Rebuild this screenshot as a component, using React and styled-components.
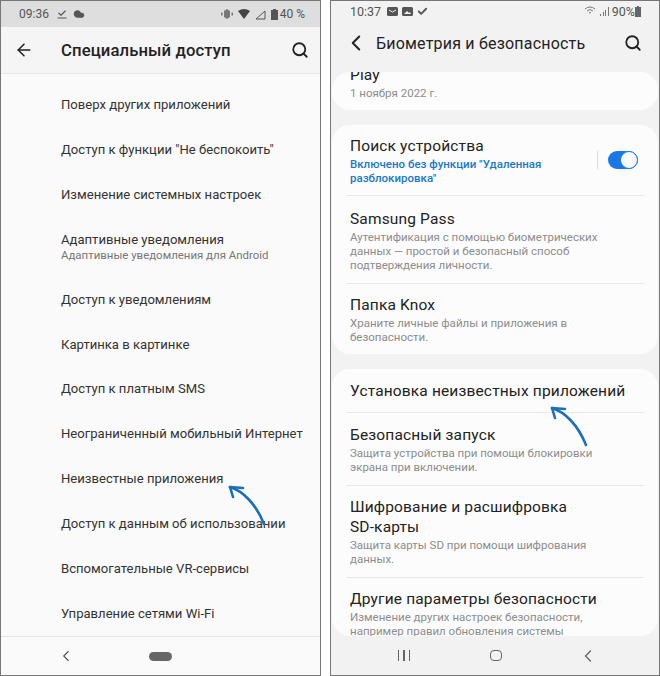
import React from 'react';
import styled, { createGlobalStyle } from 'styled-components';
import { ArrowLeft, Search, ChevronLeft, Check, Cloud } from 'lucide-react';

const GlobalStyle = createGlobalStyle`
  html, body {
    margin: 0;
    padding: 0;
    background: #fff;
    font-family: Roboto, "Liberation Sans", sans-serif;
  }
`;

const Page = styled.div`
  width: 660px;
  height: 676px;
  display: flex;
  justify-content: space-between;
  overflow: hidden;
`;

const Phone = styled.div`
  position: relative;
  box-sizing: border-box;
  width: ${p => p.$width}px;
  height: 676px;
  display: flex;
  flex-direction: column;
  border: 1px solid #777;
  background: ${p => p.$bg};
  overflow: hidden;
`;

const AndroidStatus = styled.div`
  flex: 0 0 26px;
  display: flex;
  align-items: center;
  padding: 0 15px 0 18px;
  background: #dedede;
  color: #555;
  font-size: 12px;
`;

const StatusIcons = styled.div`
  display: flex;
  align-items: center;
  gap: ${p => p.$gap || 4}px;
  margin-left: ${p => p.$left || 0}px;
`;

const StatusText = styled.span`
  margin-left: ${p => p.$left}px;
`;

const Spacer = styled.div`
  flex: 1;
`;

const AndroidBar = styled.div`
  flex: 0 0 47px;
  box-sizing: border-box;
  display: flex;
  align-items: center;
  padding: 0 11px 0 13px;
  background: #f5f5f5;
  border-bottom: 1px solid #e8e8e8;
  color: #222;
`;

const AndroidTitle = styled.h1`
  flex: 1;
  margin: 0 0 0 27px;
  font-size: 16.7px;
  font-weight: 500;
  letter-spacing: 0.1px;
`;

const AccessList = styled.div`
  flex: 1;
  padding: 8px 0 0 60px;
  background: #fafafa;
`;

const AccessRow = styled.div`
  height: ${p => (p.$tall ? 60 : 44.9)}px;
  display: flex;
  flex-direction: column;
  justify-content: center;
`;

const AccessName = styled.div`
  font-size: 13.1px;
  line-height: 17px;
  color: #333;
  white-space: nowrap;
`;

const AccessHint = styled.div`
  font-size: 11.45px;
  line-height: 15px;
  color: #777;
  white-space: nowrap;
`;

const AndroidNav = styled.div`
  flex: 0 0 40px;
  box-sizing: border-box;
  display: flex;
  align-items: center;
  padding-left: 56px;
  gap: 74px;
  background: #fafafa;
  border-top: 1px solid #e4e4e4;
  color: #555;
`;

const Pill = styled.div`
  width: 23px;
  height: 9px;
  border-radius: 5px;
  background: #666;
`;

const SamsungStatus = styled.div`
  flex: 0 0 21px;
  display: flex;
  align-items: center;
  padding: 0 18px 0 19px;
  color: #555;
  font-size: 12.5px;
`;

const SamsungBar = styled.div`
  flex: 0 0 50px;
  box-sizing: border-box;
  display: flex;
  align-items: center;
  padding: 0 17px 8px 12px;
  color: #222;
`;

const SamsungTitle = styled.h1`
  flex: 1;
  margin: 0 0 0 7px;
  font-size: 16px;
  font-weight: 400;
  letter-spacing: 0.2px;
`;

const Scroller = styled.div`
  flex: 1;
  display: flex;
  flex-direction: column;
  gap: 15px;
  overflow: hidden;
`;

const Card = styled.div`
  flex: 0 0 auto;
  height: ${p => p.$height}px;
  margin: 0 1px;
  padding: 0 14px;
  box-sizing: border-box;
  background: #fcfcfc;
  border-radius: 18px;
  overflow: hidden;
`;

const Row = styled.div`
  height: ${p => p.$height}px;
  box-sizing: border-box;
  padding: ${p => p.$top || 0}px 4px 0;
  border-bottom: ${p => (p.$last ? 'none' : '1px solid #e9e9e9')};
`;

const CutRow = styled.div`
  margin-top: -7px;
  padding: 0 4px;
`;

const ToggleRow = styled(Row)`
  display: flex;
  align-items: center;
  padding-bottom: 11px;
`;

const ToggleText = styled.div`
  flex: 1;
`;

const Divider = styled.div`
  width: 1px;
  height: 18px;
  margin-right: 10px;
  background: #ddd;
`;

const Toggle = styled.div`
  position: relative;
  width: 30px;
  height: 18px;
  margin-right: 2px;
  box-sizing: border-box;
  border-radius: 9px;
  background: #1a78e6;
`;

const Knob = styled.div`
  position: absolute;
  right: 0;
  top: 0;
  width: 18px;
  height: 18px;
  box-sizing: border-box;
  border: 1px solid #1a78e6;
  border-radius: 50%;
  background: #fbfbfb;
`;

const Title = styled.div`
  font-size: 15.5px;
  line-height: 20px;
  color: #222;
  letter-spacing: 0.15px;
`;

const Sub = styled.div`
  margin-top: 1px;
  font-size: 11.5px;
  line-height: 14px;
  color: ${p => (p.$blue ? '#1a78c8' : '#8d8d8d')};
  font-weight: ${p => (p.$blue ? 500 : 400)};
`;

const SamsungNav = styled.div`
  flex: 0 0 39px;
  display: grid;
  grid-template-columns: repeat(3, 92px);
  align-items: center;
  justify-items: center;
  padding-left: 27px;
  color: #666;
`;

const Bars = styled.div`
  display: flex;
  gap: 4px;
`;

const Bar = styled.div`
  width: 1.5px;
  height: 11px;
  background: #666;
`;

const HomeKey = styled.div`
  width: 10px;
  height: 9px;
  border: 1.5px solid #666;
  border-radius: 4px;
`;

const Arrow = styled.svg`
  position: absolute;
  left: ${p => p.$x}px;
  top: ${p => p.$y}px;
`;

const rows = [
  { name: 'Поверх других приложений' },
  { name: 'Доступ к функции "Не беспокоить"' },
  { name: 'Изменение системных настроек' },
  { name: 'Адаптивные уведомления', hint: 'Адаптивные уведомления для Android' },
  { name: 'Доступ к уведомлениям' },
  { name: 'Картинка в картинке' },
  { name: 'Доступ к платным SMS' },
  { name: 'Неограниченный мобильный Интернет' },
  { name: 'Неизвестные приложения' },
  { name: 'Доступ к данным об использовании' },
  { name: 'Вспомогательные VR-сервисы' },
  { name: 'Управление сетями Wi-Fi' },
];

const BlueArrow = ({ x, y }) => (
  <Arrow $x={x} $y={y} width="44" height="44" viewBox="0 0 44 44" fill="none">
    <path d="M2 3 C 15 7 28 20 36 40" stroke="#1b6fb8" strokeWidth="2.6" strokeLinecap="round" />
    <path d="M15 4 L2 3 L5 13" stroke="#1b6fb8" strokeWidth="2.6" strokeLinecap="round" strokeLinejoin="round" />
  </Arrow>
);

const App = () => (
  <Page>
    <GlobalStyle />
    <Phone $width={321} $bg="#fafafa">
      <AndroidStatus>
        09:36
        <StatusIcons $left={8} $gap={6}>
          <svg width="10" height="9" viewBox="0 0 10 9" fill="none" stroke="#555" strokeWidth="1.2">
            <path d="M1.5 3 L4 5.2 L8.5 0.8 M0.5 8 H9.5" />
          </svg>
          <Cloud size={12} fill="#555" strokeWidth={1} />
        </StatusIcons>
        <Spacer />
        <StatusIcons $gap={5}>
          <svg width="12" height="10" viewBox="0 0 12 10">
            <path d="M3 2 L6 0 L9 2 V8 L6 10 L3 8 Z M0 3.5h1.5v3H0z M10.5 3.5H12v3h-1.5z" fill="#777" />
          </svg>
          <svg width="12" height="10" viewBox="0 0 12 10">
            <path d="M0 2 Q6 -2 12 2 L6 10z" fill="#444" />
          </svg>
          <svg width="11" height="11" viewBox="0 0 11 11">
            <path d="M1 10 L10 2 V10 Z" fill="none" stroke="#555" strokeWidth="1" />
          </svg>
          <svg width="7" height="11" viewBox="0 0 7 11">
            <path d="M2 0h3v1h2v10H0V1h2z" fill="#555" />
          </svg>
        </StatusIcons>
        <StatusText $left={2}>40 %</StatusText>
      </AndroidStatus>
      <AndroidBar>
        <ArrowLeft size={20} strokeWidth={1.8} />
        <AndroidTitle>Специальный доступ</AndroidTitle>
        <Search size={18} strokeWidth={2.4} />
      </AndroidBar>
      <AccessList>
        {rows.map(row => (
          <AccessRow key={row.name} $tall={!!row.hint}>
            <AccessName>{row.name}</AccessName>
            {row.hint && <AccessHint>{row.hint}</AccessHint>}
          </AccessRow>
        ))}
      </AccessList>
      <AndroidNav>
        <ChevronLeft size={18} strokeWidth={1.5} />
        <Pill />
      </AndroidNav>
      <BlueArrow x={227} y={483} />
    </Phone>

    <Phone $width={330} $bg="#f2f2f2">
      <SamsungStatus>
        10:37
        <StatusIcons $left={6} $gap={4}>
          <svg width="11" height="9" viewBox="0 0 11 9">
            <rect width="11" height="9" rx="1.5" fill="#555" />
            <path d="M2 3l3.5 2L9 3" stroke="#f2f2f2" fill="none" />
          </svg>
          <svg width="11" height="9" viewBox="0 0 11 9">
            <rect width="11" height="9" rx="1.5" fill="#555" />
            <path d="M2 7l3-3 2 2 1-1 1 2z" fill="#f2f2f2" />
          </svg>
          <Check size={11} strokeWidth={4} />
        </StatusIcons>
        <Spacer />
        <StatusIcons $gap={3}>
          <svg width="13" height="11" viewBox="0 0 13 11" fill="none" stroke="#777" strokeWidth="1">
            <path d="M1 3 Q6 -1 11 3 M3 5 Q6 2 9 5 M5 7 Q6 6 7 7" />
          </svg>
          <svg width="9" height="9" viewBox="0 0 9 9">
            <path d="M0 7h1v2H0z M3 5h1v4H3z M5 3h1v6H5z M8 0h1v9H8z" fill="#777" />
          </svg>
        </StatusIcons>
        <StatusText $left={3}>90%</StatusText>
        <svg width="6" height="11" viewBox="0 0 6 11">
          <path d="M2 0h2v1h2v10H0V1h2z" fill="#666" />
        </svg>
      </SamsungStatus>
      <SamsungBar>
        <ChevronLeft size={26} strokeWidth={1.8} />
        <SamsungTitle>Биометрия и безопасность</SamsungTitle>
        <Search size={18} strokeWidth={2.4} />
      </SamsungBar>
      <Scroller>
        <Card $height={38}>
          <CutRow>
            <Title>Play</Title>
            <Sub>1 ноября 2022 г.</Sub>
          </CutRow>
        </Card>
        <Card $height={229}>
          <ToggleRow $height={71} $top={11}>
            <ToggleText>
              <Title>Поиск устройства</Title>
              <Sub $blue>Включено без функции "Удаленная<br />разблокировка"</Sub>
            </ToggleText>
            <Divider />
            <Toggle><Knob /></Toggle>
          </ToggleRow>
          <Row $height={88} $top={13}>
            <Title>Samsung Pass</Title>
            <Sub>Аутентификация с помощью биометрических<br />данных — простой и безопасный способ<br />подтверждения личности.</Sub>
          </Row>
          <Row $height={70} $top={11} $last>
            <Title>Папка Knox</Title>
            <Sub>Храните личные файлы и приложения в<br />безопасности.</Sub>
          </Row>
        </Card>
        <Card $height={267}>
          <Row $height={44} $top={12}>
            <Title>Установка неизвестных приложений</Title>
          </Row>
          <Row $height={73} $top={12}>
            <Title>Безопасный запуск</Title>
            <Sub>Защита устройства при помощи блокировки<br />экрана при включении.</Sub>
          </Row>
          <Row $height={92} $top={11}>
            <Title>Шифрование и расшифровка<br />SD-карты</Title>
            <Sub>Защита карты SD при помощи шифрования<br />данных.</Sub>
          </Row>
          <Row $height={58} $top={11} $last>
            <Title>Другие параметры безопасности</Title>
            <Sub>Изменение других настроек безопасности,<br />например правил обновления системы</Sub>
          </Row>
        </Card>
      </Scroller>
      <SamsungNav>
        <Bars><Bar /><Bar /><Bar /></Bars>
        <HomeKey />
        <ChevronLeft size={20} strokeWidth={1.6} />
      </SamsungNav>
      <BlueArrow x={219} y={404} />
    </Phone>
  </Page>
);

export default App;
